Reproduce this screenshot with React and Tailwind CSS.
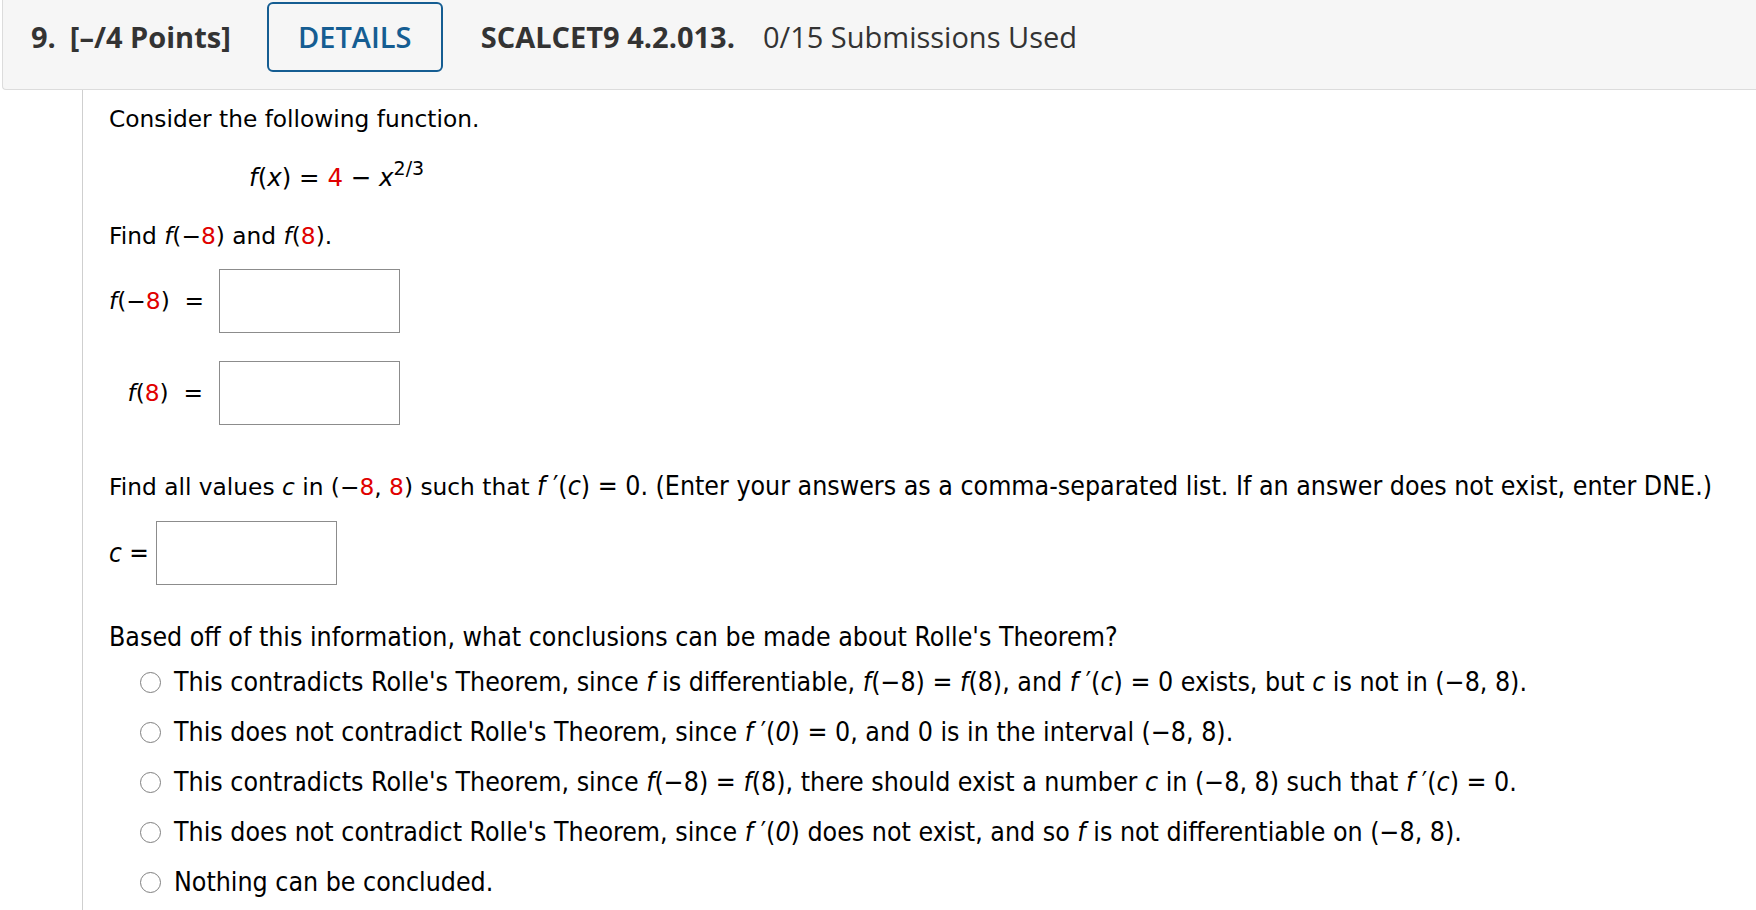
import React from 'react';

// Rendu d'une question WebAssign (théorème de Rolle)
const R = ({ children }) => <span className="text-[#e00000]">{children}</span>;
const I = ({ children }) => <i>{children}</i>;

const Champ = ({ className = '' }) => (
  <input
    type="text"
    className={`h-[64px] w-[181px] border border-[#8c8c8c] bg-white outline-none ${className}`}
  />
);

const Choix = ({ children }) => (
  <label className="flex h-[28px] items-center">
    <span className="ml-[31px] mr-[13px] h-[21px] w-[21px] shrink-0 rounded-full border-[1.5px] border-[#808080] bg-white" />
    <span>{children}</span>
  </label>
);

const App = () => {
  const fp = (x) => (
    <>
      <I>f</I> ′(<I>{x}</I>)
    </>
  );

  return (
    <div className="min-h-[910px] w-full bg-white text-black font-['DejaVu_Sans',Verdana,sans-serif] text-[23.3px]">
      {/* En-tête de la question */}
      <div className="ml-[2px] flex h-[90px] items-start rounded-bl-[4px] border-b border-l border-[#dcdcdc] bg-[#f6f6f6] pt-[2px] font-['Open_Sans',sans-serif] text-[29px] text-[#333]">
        <div className="flex h-[70px] items-center">
          <span className="ml-[28px] font-bold">9.</span>
          <span className="ml-[14px] font-bold">[–/4 Points]</span>
          <button className="ml-[36px] h-[70px] w-[176px] rounded-[6px] border-2 border-[#155d92] font-semibold text-[#155d92]">
            DETAILS
          </button>
          <span className="ml-[38px] font-bold">SCALCET9 4.2.013.</span>
          <span className="ml-[28px]">0/15 Submissions Used</span>
        </div>
      </div>

      <div className="flex">
        <div className="w-[82px] shrink-0" />
        <div className="min-h-[820px] flex-1 border-l-[1.5px] border-[#cfcfcf] pl-[26px] leading-[28px]">
          <p className="mt-[15px]">Consider the following function.</p>

          <p className="mt-[31px] pl-[140px] text-[24.5px]">
            <I>f</I>(<I>x</I>) = <R>4</R> − <I>x</I>
            <sup className="top-[-11px] text-[19px]">2/3</sup>
          </p>

          <p className="mt-[30px]">
            Find <I>f</I>(−<R>8</R>) and <I>f</I>(<R>8</R>).
          </p>

          <div className="mt-[19px] flex items-center">
            <span className="w-[94px] whitespace-nowrap text-right">
              <I>f</I>(−<R>8</R>)&nbsp;&nbsp;=
            </span>
            <Champ className="ml-[16px]" />
          </div>

          <div className="mt-[28px] flex items-center">
            <span className="w-[94px] whitespace-nowrap text-right">
              <I>f</I>(<R>8</R>)&nbsp;&nbsp;=
            </span>
            <Champ className="ml-[16px]" />
          </div>

          <p className="mt-[47px] whitespace-nowrap">
            Find all values <I>c</I> in (−<R>8</R>, <R>8</R>) such that{' '}
            <span className="font-['DejaVu_Sans_Condensed','Liberation_Sans_Narrow',sans-serif] text-[26.5px]">
              {fp('c')} = 0. (Enter your answers as a comma-separated list. If an answer does not exist, enter DNE.)
            </span>
          </p>

          <div className="mt-[20px] flex items-center">
            <span className="font-['DejaVu_Sans_Condensed','Liberation_Sans_Narrow',sans-serif] text-[26px]">
              <I>c</I> =
            </span>
            <Champ className="ml-[7px] h-[63px]" />
          </div>

          <div className="font-['DejaVu_Sans_Condensed','Liberation_Sans_Narrow',sans-serif] text-[26.5px]">
            <p className="mt-[38px]">Based off of this information, what conclusions can be made about Rolle's Theorem?</p>

            <div className="mt-[17px] flex flex-col gap-[22px]">
              <Choix>
                This contradicts Rolle's Theorem, since <I>f</I> is differentiable, <I>f</I>(−8) = <I>f</I>(8), and {fp('c')} = 0
                exists, but <I>c</I> is not in (−8, 8).
              </Choix>
              <Choix>
                This does not contradict Rolle's Theorem, since {fp('0')} = 0, and 0 is in the interval (−8, 8).
              </Choix>
              <Choix>
                This contradicts Rolle's Theorem, since <I>f</I>(−8) = <I>f</I>(8), there should exist a number <I>c</I> in (−8,
                8) such that {fp('c')} = 0.
              </Choix>
              <Choix>
                This does not contradict Rolle's Theorem, since {fp('0')} does not exist, and so <I>f</I> is not differentiable
                on (−8, 8).
              </Choix>
              <Choix>Nothing can be concluded.</Choix>
            </div>
          </div>
        </div>
      </div>
    </div>
  );
};

export default App;
